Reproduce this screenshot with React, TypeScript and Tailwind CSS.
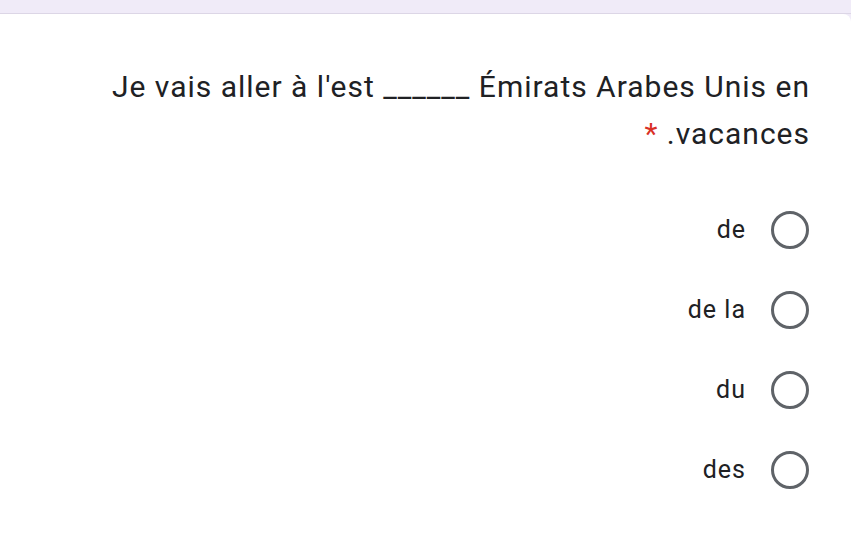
export default function App() {
  const options = ["de", "de la", "du", "des"];

  return (
    <div className="w-[851px] h-[540px] bg-[#f0ebf8] overflow-hidden" style={{ fontFamily: "Roboto, 'Noto Sans', sans-serif" }}>
      <div className="h-[14px] border-b border-[#dcd6e6]" />
      <div className="h-full bg-white rounded-tr-lg pt-[49px] pr-[42px]" dir="rtl">
        {/* Question */}
        <p className="mr-[-1px] text-[30px] leading-[47px] tracking-[1px] text-[#202124] text-right">
          Je vais aller à l'est ______ Émirats Arabes Unis en
          <br />
          vacances. <span className="text-[#d93025]">*</span>
        </p>

        {/* Options */}
        <div className="mt-[54px] flex flex-col gap-[42px]">
          {options.map((opt) => (
            <label key={opt} className="flex items-center gap-[25px] h-[38px]">
              <span className="w-[38px] h-[38px] rounded-full border-[3px] border-[#5f6368] shrink-0" />
              <span className="text-[25px] tracking-[1px] text-[#202124]">{opt}</span>
            </label>
          ))}
        </div>
      </div>
    </div>
  );
}
